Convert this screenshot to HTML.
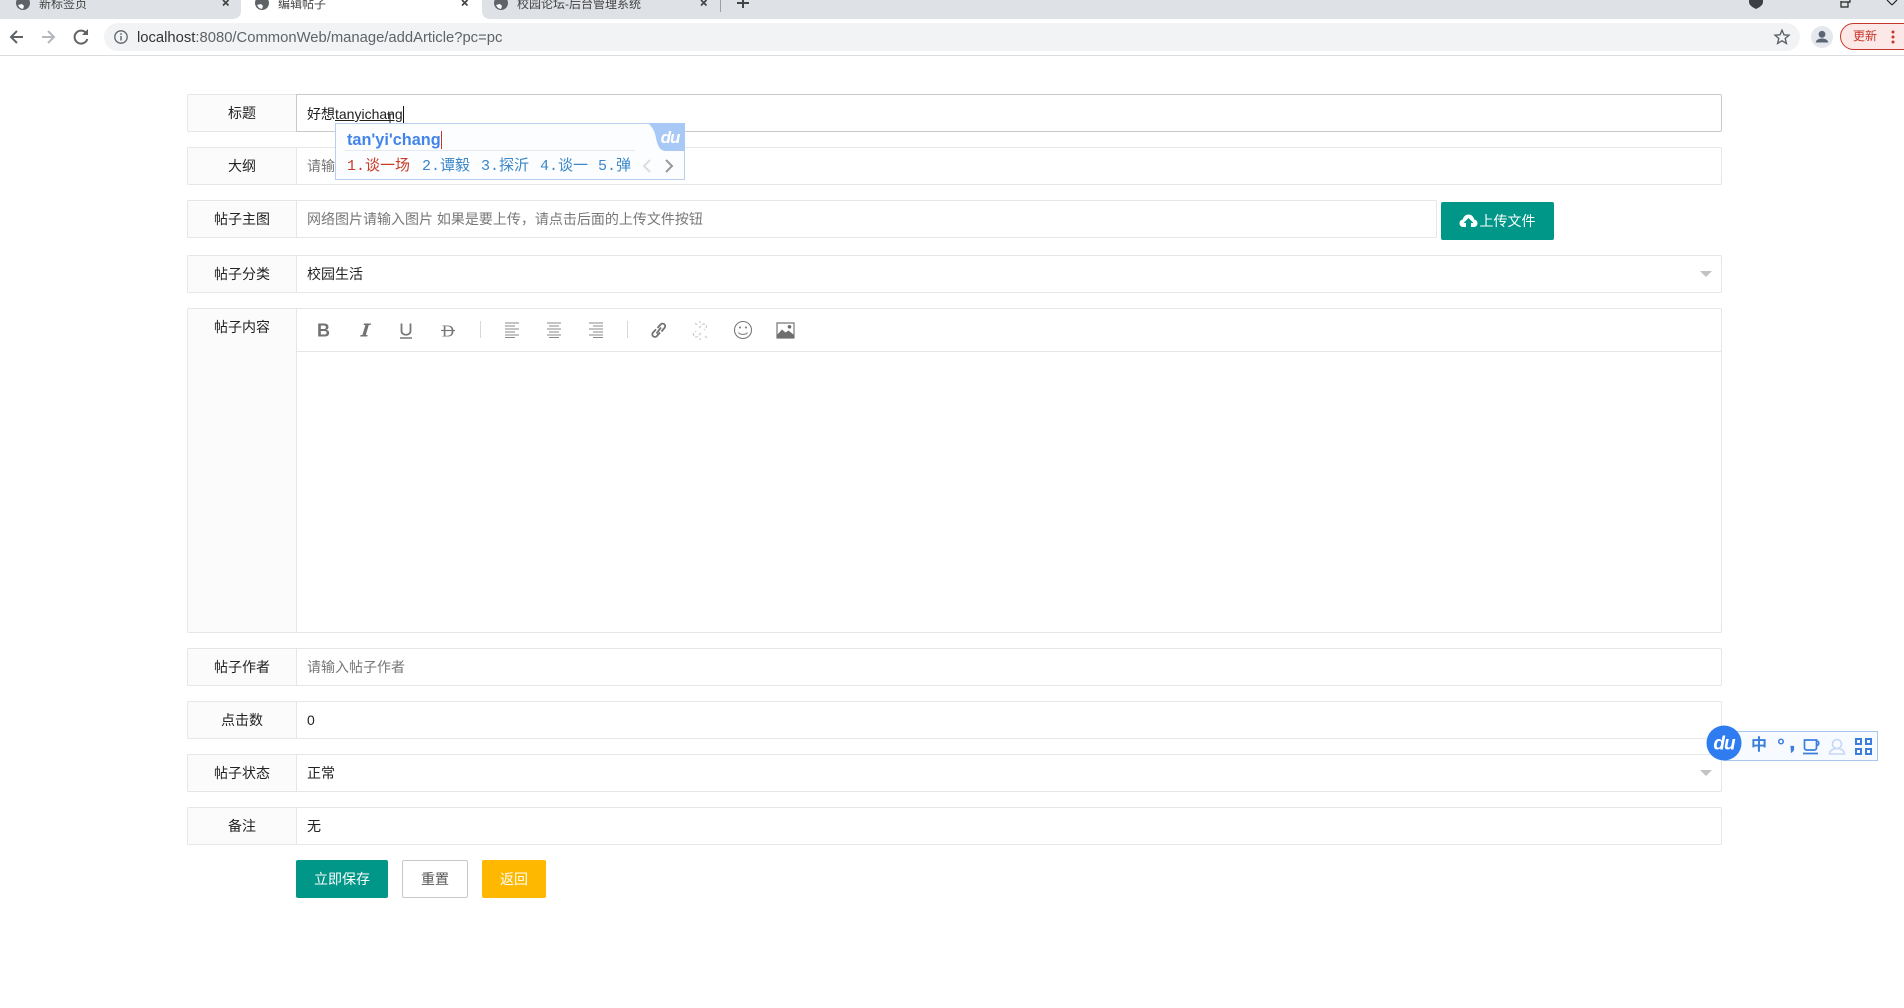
<!DOCTYPE html>
<html lang="zh"><head><meta charset="utf-8"><title>编辑帖子</title>
<style>
*{box-sizing:border-box}
html,body{margin:0;padding:0;width:1904px;height:1008px;overflow:hidden;background:#fff;font-family:"Liberation Sans","Noto Sans CJK SC",sans-serif;font-size:14px;color:#222}
.a{position:absolute}
.strip{left:0;top:0;width:1904px;height:19px;background:#dee1e6}
.tabt{font-size:12px;color:#444;line-height:14px;top:-3px;white-space:nowrap}
.bar{left:0;top:19px;width:1904px;height:37px;background:#fff;border-bottom:1px solid #dadce0}
.lab{left:187px;width:110px;height:38px;background:#fbfbfb;border:1px solid #e6e6e6;text-align:center;line-height:36px;color:#222;border-radius:2px 0 0 2px}
.inp{left:296px;width:1426px;height:38px;background:#fff;border:1px solid #e6e6e6;padding-left:10px;line-height:36px;color:#222;border-radius:0 2px 2px 0}
.ph{color:#777}
.arr{width:0;height:0;border-left:6px solid transparent;border-right:6px solid transparent;border-top:6px solid #c2c2c2}
.btn{height:38px;line-height:38px;text-align:center;border-radius:2px;color:#fff}
.cand{font-family:"Liberation Mono","WenQuanYi Zen Hei",monospace;font-size:15px;line-height:20px;top:157px;white-space:nowrap;color:#3b87c8}
</style></head><body>

<div class="a strip"></div>
<div class="a" style="left:241px;top:0;width:241px;height:19px;background:#fff"></div>
<div class="a" style="left:234px;top:12px;width:7px;height:7px;background:radial-gradient(circle at 0 0,#dee1e6 6.500px,#fff 7px)"></div>
<div class="a" style="left:482px;top:12px;width:7px;height:7px;background:radial-gradient(circle at 100% 0,#dee1e6 6.500px,#fff 7px)"></div>

<svg class="a" style="left:0;top:0" width="800" height="19" viewBox="0 0 800 19">
 <g fill="#5f6368">
  <circle cx="23" cy="3" r="7"/><circle cx="262" cy="3" r="7"/><circle cx="501" cy="3" r="7"/>
 </g>
 <g fill="#fff"><path d="M18 5l4-1 2 2-1 3-3-1zM257 5l4-1 2 2-1 3-3-1zM496 5l4-1 2 2-1 3-3-1z"/></g>
 <g stroke="#444" stroke-width="1.700" fill="none">
  <path d="M223 0l5.500 5.500M228.500 0L223 5.500M462 0l5.500 5.500M467.500 0L462 5.500M701 0l5.500 5.500M706.500 0L701 5.500"/>
 </g>
 <path d="M720.500 0v12" stroke="#9aa0a6" stroke-width="1"/>
 <path d="M743 0v8M737 3h12" stroke="#444" stroke-width="2"/>
</svg>
<div class="a tabt" style="left:39px">新标签页</div>
<div class="a tabt" style="left:278px">编辑帖子</div>
<div class="a tabt" style="left:517px">校园论坛-后台管理系统</div>

<svg class="a" style="left:1740px;top:0" width="164" height="19" viewBox="0 0 164 19">
 <path d="M9 0h14v2c0 3-3 5-7 7-4-2-7-4-7-7z" fill="#3c4043"/>
 <path d="M101 2h9v-2M101 1v6h7V2" fill="none" stroke="#222" stroke-width="1.200"/>
 <path d="M147 0l5 5M157 0l-5 5" stroke="#222" stroke-width="1.200"/>
</svg>

<div class="a bar"></div>
<svg class="a" style="left:0;top:19px" width="140" height="36" viewBox="0 0 140 36">
 <path d="M23 18H11M17 12l-6 6 6 6" fill="none" stroke="#5f6368" stroke-width="2"/>
 <path d="M42 18h12M48 12l6 6-6 6" fill="none" stroke="#b4b7bb" stroke-width="2"/>
 <path d="M86.500 14.500a6.500 6.500 0 1 0 .8 5.500" fill="none" stroke="#5f6368" stroke-width="2"/>
 <path d="M88 10v6h-6z" fill="#5f6368"/>
</svg>
<div class="a" style="left:104px;top:23px;width:1696px;height:28px;background:#f1f3f4;border-radius:14px"></div>
<svg class="a" style="left:113px;top:29px" width="16" height="16" viewBox="0 0 16 16">
 <circle cx="8" cy="8" r="6.200" fill="none" stroke="#5f6368" stroke-width="1.300"/>
 <path d="M8 7v4.500M8 4.300v1.600" stroke="#5f6368" stroke-width="1.400"/>
</svg>
<div class="a" style="left:137px;top:28.500px;font-size:14.800px;line-height:18px;color:#5f6368;white-space:nowrap"><span style="color:#333">localhost</span>:8080/CommonWeb/manage/addArticle?pc=pc</div>
<svg class="a" style="left:1773px;top:28px" width="18" height="18" viewBox="0 0 18 18">
 <path d="M9 2.200l2 4.600 5 .4-3.800 3.300 1.200 4.900L9 12.800 4.600 15.400l1.200-4.900L2 7.200l5-.4z" fill="none" stroke="#5f6368" stroke-width="1.400"/>
</svg>
<svg class="a" style="left:1811px;top:26px" width="22" height="22" viewBox="0 0 22 22">
 <circle cx="11" cy="11" r="11" fill="#e4e7eb"/>
 <circle cx="11" cy="8.300" r="3.400" fill="#5a6472"/>
 <path d="M4.800 16.500c0-2.800 3.500-4 6.200-4s6.200 1.200 6.200 4z" fill="#5a6472"/>
</svg>
<div class="a" style="left:1840px;top:23px;width:80px;height:27px;border:1px solid #c5352b;border-radius:14px;background:#fce8e6"></div>
<div class="a" style="left:1853px;top:29px;font-size:12px;line-height:15px;color:#c5352b">更新</div>
<svg class="a" style="left:1890px;top:29px" width="6" height="16" viewBox="0 0 6 16"><g fill="#c5352b"><circle cx="3" cy="3" r="1.500"/><circle cx="3" cy="8" r="1.500"/><circle cx="3" cy="13" r="1.500"/></g></svg>

<!-- form -->
<div class="a lab" style="top:94px;line-height:37px">标题</div>
<div class="a inp" style="top:94px;border-color:#c9c9c9;line-height:37px;padding-top:1px;color:#222">好想<span style="text-decoration:underline">tanyichang</span></div>
<div class="a" style="left:403px;top:106px;width:1px;height:17px;background:#111"></div>
<svg class="a" style="left:385px;top:113px" width="10" height="16" viewBox="0 0 10 16"><path d="M2 1h2l1 1 1-1h2M5 2v12M2 15h2l1-1 1 1h2" fill="none" stroke="#222" stroke-width="1"/></svg>

<div class="a lab" style="top:147px">大纲</div>
<div class="a inp ph" style="top:147px">请输入帖子大纲</div>

<div class="a lab" style="top:200px">帖子主图</div>
<div class="a inp ph" style="top:200px;width:1141px">网络图片请输入图片 如果是要上传，请点击后面的上传文件按钮</div>
<div class="a btn" style="left:1441px;top:202px;width:113px;background:#009688;padding-left:20px">上传文件</div>
<svg class="a" style="left:1459px;top:213px" width="19" height="16" viewBox="0 0 19 16"><path d="M4.500 14C2 14 .5 12.300.5 10.200c0-2 1.500-3.500 3.300-3.700C4.400 3.500 6.700 1.500 9.500 1.500s5.100 2 5.700 5c1.800.2 3.300 1.700 3.300 3.700 0 2.100-1.500 3.800-4 3.800h-2.500v-4h2.500l-5-5-5 5H7v4z" fill="#fff"/></svg>

<div class="a lab" style="top:255px">帖子分类</div>
<div class="a inp" style="top:255px">校园生活</div>
<div class="a arr" style="left:1700px;top:271px"></div>

<div class="a lab" style="top:308px;height:325px;line-height:20px;padding-top:8px">帖子内容</div>
<div class="a inp" style="top:308px;height:325px"></div>
<div class="a" style="left:297px;top:351px;width:1424px;height:1px;background:#e6e6e6"></div>
<svg class="a" style="left:297px;top:309px" width="520" height="42" viewBox="297 309 520 42">
 <text x="323.500" y="336.500" text-anchor="middle" font-family="Liberation Sans" font-weight="bold" font-size="18" fill="#727272">B</text>
 <path d="M364 323.500h7l-.4 1.500h-1.800l-3 10h1.800l-.4 1.500h-7l.4-1.500h1.800l3-10h-1.800z" fill="#727272"/>
 <path d="M401.500 323.500v7.500c0 5 9 5 9 0v-7.500" fill="none" stroke="#777" stroke-width="1.800"/>
 <path d="M400 338h12" stroke="#777" stroke-width="1.500"/>
 <text x="448" y="336.500" text-anchor="middle" font-family="Liberation Serif" font-size="17" fill="#777">D</text>
 <path d="M441 330.500h14" stroke="#777" stroke-width="1.200"/>
 <path d="M480.500 321v17M627.500 321v17" stroke="#d8d8d8" stroke-width="1"/>
 <g stroke="#8a8a8a" stroke-width="1.100" fill="none">
  <path d="M505 323h14M505 326h10M505 329h14M505 332h10M505 335h14M505 337.500h10"/>
  <path d="M547 323h14M549 326h10M547 329h14M549 332h10M547 335h14M549 337.500h10"/>
  <path d="M589 323h14M593 326h10M589 329h14M593 332h10M589 335h14M593 337.500h10"/>
 </g>
 <g fill="none" stroke="#707070" stroke-width="1.800">
  <path d="M657.500 328l3.200-3.600a2.600 2.600 0 0 1 4 3.300L661.500 331.500"/>
  <path d="M660 332.500l-3.200 3.600a2.600 2.600 0 0 1-4-3.300l3.200-3.500"/>
  <path d="M656.500 333.500l4.500-6"/>
 </g>
 <g fill="none" stroke="#d2d2d2" stroke-width="1.400" stroke-dasharray="3 1.500">
  <path d="M699 328l3-3a2.500 2.500 0 0 1 4 3l-2 2M701 333l-3 3a2.500 2.500 0 0 1-4-3l2-2"/>
  <path d="M695 323l2 2M705 336l2 2M700 321v2M700 338v2"/>
 </g>
 <circle cx="743" cy="330" r="8.500" fill="none" stroke="#777" stroke-width="1.100"/>
 <circle cx="740" cy="327.500" r="1" fill="#777"/><circle cx="746" cy="327.500" r="1" fill="#777"/>
 <path d="M738.500 332.500c1.500 2.500 7.500 2.500 9 0" fill="none" stroke="#777" stroke-width="1.100"/>
 <path d="M777 323h17v15h-17z" fill="#fff" stroke="#777" stroke-width="1.200"/>
 <path d="M777 338v-3l5-5.500 3.500 3 3-2 5.500 4.500v3z" fill="#6e6e6e"/>
 <circle cx="789.500" cy="326.800" r="1.800" fill="#6e6e6e"/>
</svg>

<div class="a lab" style="top:648px">帖子作者</div>
<div class="a inp ph" style="top:648px">请输入帖子作者</div>
<div class="a lab" style="top:701px">点击数</div>
<div class="a inp" style="top:701px">0</div>
<div class="a lab" style="top:754px">帖子状态</div>
<div class="a inp" style="top:754px">正常</div>
<div class="a arr" style="left:1700px;top:770px"></div>
<div class="a lab" style="top:807px">备注</div>
<div class="a inp" style="top:807px">无</div>

<div class="a btn" style="left:296px;top:860px;width:92px;background:#009688">立即保存</div>
<div class="a btn" style="left:402px;top:860px;width:66px;background:#fff;border:1px solid #c9c9c9;color:#555;line-height:36px">重置</div>
<div class="a btn" style="left:482px;top:860px;width:64px;background:#ffb800">返回</div>

<!-- IME popup -->
<div class="a" style="left:335px;top:123px;width:350px;height:57px;background:#fcfdff;border:1px solid #b7cfec"></div>
<div class="a" style="left:347px;top:130px;font-size:16.300px;font-weight:bold;line-height:20px;color:#4285ea;white-space:nowrap">tan'yi'chang</div>
<div class="a" style="left:441px;top:131px;width:1px;height:18px;background:#c0392b"></div>
<div class="a" style="left:345px;top:150px;width:290px;height:1px;background:#e6e9ee"></div>
<div class="a cand" style="left:347px;color:#c93a26">1.谈一场</div>
<div class="a cand" style="left:422px">2.谭毅</div>
<div class="a cand" style="left:481px">3.探沂</div>
<div class="a cand" style="left:540px">4.谈一</div>
<div class="a cand" style="left:598px">5.弹</div>
<svg class="a" style="left:640px;top:157px" width="40" height="18" viewBox="0 0 40 18">
 <path d="M10 3L4 9l6 6" fill="none" stroke="#dcdcdc" stroke-width="2"/>
 <path d="M26 3l6 6-6 6" fill="none" stroke="#999" stroke-width="2"/>
</svg>
<svg class="a" style="left:648px;top:123px" width="37" height="28" viewBox="0 0 37 28">
 <path d="M0 0h37v28H18C8 28 9 14 6 8 4 4 2 2 0 0z" fill="#a8c8f6"/>
 <text x="22" y="20" text-anchor="middle" font-family="Liberation Sans" font-style="italic" font-weight="bold" font-size="17" letter-spacing="-1" fill="#fff">du</text>
</svg>

<!-- IME status bar -->
<div class="a" style="left:1724px;top:731px;width:154px;height:30px;background:#f7faff;border:1px solid #a9c6ee"></div>
<svg class="a" style="left:1706px;top:725px" width="36" height="36" viewBox="0 0 36 36">
 <circle cx="18" cy="18" r="17.500" fill="#2f7cf0"/>
 <text x="18" y="24.500" text-anchor="middle" font-family="Liberation Sans" font-style="italic" font-weight="bold" font-size="19" letter-spacing="-1" fill="#fff">du</text>
</svg>
<div class="a" style="left:1751px;top:736px;font-size:16px;line-height:20px;font-weight:bold;color:#3b7fdd">中</div>
<svg class="a" style="left:1775px;top:735px" width="100" height="22" viewBox="1775 735 100 22">
 <circle cx="1781" cy="741.500" r="2.300" fill="none" stroke="#3b7fdd" stroke-width="1.500"/>
 <path d="M1790.500 746.500h3v2.500c0 1.500-1 2.500-2.500 3.500" fill="#3b7fdd" stroke="#3b7fdd" stroke-width="1.200"/>
 <path d="M1804.500 740h12v8a2 2 0 0 1-2 2h-8a2 2 0 0 1-2-2zM1816.500 741c3 0 3 4 0 4.500M1803 753.500h15" fill="none" stroke="#3b7fdd" stroke-width="1.700"/>
 <circle cx="1837" cy="744" r="4.500" fill="none" stroke="#c5d8f5" stroke-width="1.600"/>
 <path d="M1829.500 754c0-3.500 3.500-5.500 7.500-5.500s7.500 2 7.500 5.500z" fill="none" stroke="#c5d8f5" stroke-width="1.600"/>
 <g fill="none" stroke="#3b7fdd" stroke-width="2">
  <rect x="1856" y="739" width="5" height="5"/><rect x="1866" y="739" width="5" height="5"/>
  <rect x="1856" y="749" width="5" height="5"/><rect x="1866" y="749" width="5" height="5"/>
 </g>
</svg>
</body></html>
